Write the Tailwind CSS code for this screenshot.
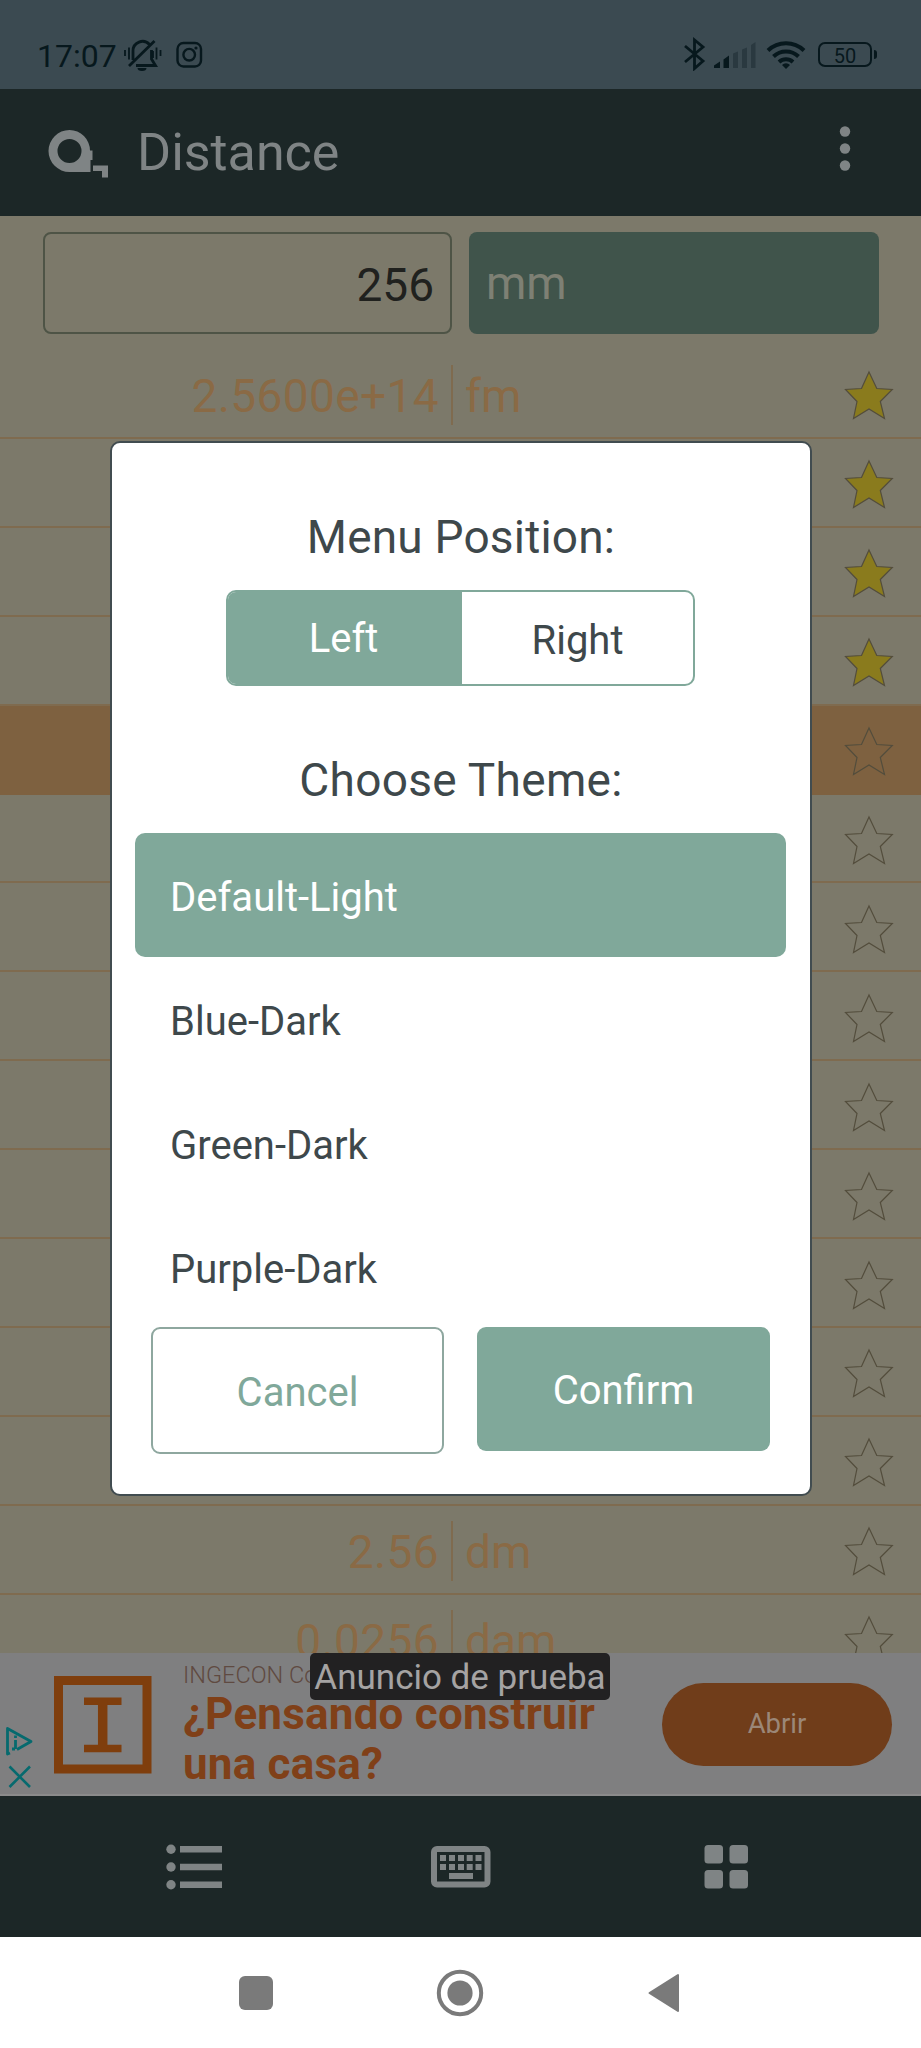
<!DOCTYPE html>
<html lang="en">
<head>
<meta charset="utf-8">
<title>Distance</title>
<script src="https://cdn.jsdelivr.net/npm/@tailwindcss/browser@4"></script>
</head>
<body class="bg-white">
<div class="relative flex h-[2048px] w-[921px] flex-col overflow-hidden font-['Roboto',sans-serif]">

  <!-- Status bar -->
  <div class="flex h-[89px] shrink-0 items-start bg-[#3b4a51] pl-[37px] text-[#07181d]">
    <span class="mt-[37px] w-[81px] text-[32px] leading-[38px] whitespace-nowrap">17:07</span>
    <svg class="mt-[36px] ml-[5px] h-[38px] w-[40px]" viewBox="0 0 40 38" fill="none" stroke="currentColor" stroke-width="2.8">
      <path d="M10 24V15a9.5 9.5 0 0 1 16.5-6.5M28.5 14v9l4 6.5H13M6 30L31.500 5M29.500 15v7"/>
      <path d="M14.500 32h9a4.500 3 0 0 1-9 0z" fill="currentColor" stroke="none"/>
      <path d="M2 14v6M6 11.500v12M33.500 11.500v12M37.500 14v6" stroke-width="1.800"/>
    </svg>
    <svg class="mt-[41px] ml-[12px] h-[28px] w-[28px]" viewBox="0 0 28 28" fill="none" stroke="currentColor" stroke-width="2.400">
      <rect x="2.500" y="2" width="23.500" height="23.500" rx="6"/><circle cx="14.200" cy="13.700" r="5.800"/><circle cx="21" cy="7" r="1.600" fill="currentColor" stroke="none"/>
    </svg>
    <svg class="mt-[37px] ml-[480px] h-[34px] w-[24px]" viewBox="0 0 24 34" fill="none" stroke="currentColor" stroke-width="2.800">
      <path d="M2 9l18 15-8.500 7.500V3L20 10 2 25"/>
    </svg>
    <svg class="mt-[41px] ml-[7px] h-[28px] w-[42px]" viewBox="0 0 42 28" fill="currentColor">
      <path d="M0 27v-2.500l6-4V27zM9.500 27v-8.500l5.500-4V27z"/>
      <path d="M19 27V12.500l5-2V27zM28 27V8.500l5-2V27zM37 27V4l4.500-3v26z" fill="#2a3940"/>
    </svg>
    <svg class="mt-[39px] ml-[10px] h-[32px] w-[40px]" viewBox="0 0 40 32" fill="none" stroke="currentColor" stroke-width="4">
      <path d="M2 11.500a26 26 0 0 1 36 0M7.500 17.500a18 18 0 0 1 25 0M13 23a10.500 10.500 0 0 1 14 0"/>
      <path d="M20 30l-4-4a5.500 5.500 0 0 1 8 0z" fill="currentColor" stroke="none"/>
    </svg>
    <div class="mt-[42px] ml-[12px] flex h-[25px] w-[54px] items-center justify-center rounded-[7px] border-[2.500px] border-current text-[20px] leading-none"><span class="pt-[2px]">50</span></div>
    <div class="mt-[50px] ml-[2px] h-[9px] w-[3px] rounded-r bg-current"></div>
  </div>

  <!-- App bar -->
  <header class="flex h-[127px] shrink-0 items-start bg-[#1c2727] pl-[48px] text-[#7f8485]">
    <svg class="mt-[40px] h-[52px] w-[61px]" viewBox="0 0 61 52" fill="currentColor">
      <path fill-rule="evenodd" d="M21.500 1A20.700 20.700 0 0 1 42 21.500h2.500V31H42.500V43H21.500A21 21 0 0 1 21.500 1zM21.500 10a12 12 0 1 0 0 24 12 12 0 0 0 0-24z"/>
      <path d="M45 36.500h15V48.500h-6v-6.500h-9z"/>
    </svg>
    <h1 class="mt-[34px] ml-[28px] text-[52px] leading-[60px]">Distance</h1>
    <svg class="mt-[36px] ml-auto mr-[68px] h-[48px] w-[16px]" viewBox="0 0 16 48" fill="currentColor"><circle cx="8" cy="6.500" r="5.200"/><circle cx="8" cy="23.500" r="5.200"/><circle cx="8" cy="40.500" r="5.200"/></svg>
  </header>

  <!-- Converter -->
  <main class="h-[1437px] shrink-0 overflow-hidden bg-[#7c796a] pt-[16px]">
    <div class="flex gap-[17px] pr-[42px] pl-[43px]">
      <div class="flex h-[102px] w-[409px] items-center justify-end rounded-[8px] border-2 border-[#4e5446] pt-[3px] pr-[16px] text-[46px] leading-[54px] text-[#20211e]">256</div>
      <div class="flex h-[102px] flex-1 items-center rounded-[8px] bg-[#40544b] pl-[17px] text-[46px] leading-[54px] text-[#7e8074]">mm</div>
    </div>
    <div id="rows" class="mt-[16px]"></div>
  </main>

  <!-- Ad banner -->
  <div class="relative flex h-[143px] shrink-0 border-b-2 border-[#8b8b8b] bg-[#7f7f80]">
    <div class="flex w-[54px] flex-col pt-[72px] pl-[5px] text-[#066a6e]">
      <svg class="h-[32px] w-[30px]" viewBox="0 0 30 32" fill="none" stroke="currentColor" stroke-width="2.800" stroke-linejoin="round"><path d="M5 28l-2.500 1V3.500L26 16.500 12 24.500"/><path d="M10.500 15v9M10.500 10.500v2.500M7 24h3"/></svg>
      <svg class="mt-[8px] ml-[3px] h-[24px] w-[24px]" viewBox="0 0 24 24" fill="none" stroke="currentColor" stroke-width="2.600"><path d="M1.500 1.500L22 22M22 1.500L1.500 22"/></svg>
    </div>
    <svg class="mt-[23px] h-[98px] w-[98px] text-[#7f3e0d]" viewBox="0 0 98 98" fill="none" stroke="currentColor"><rect x="4.500" y="4.500" width="88.500" height="88.500" stroke-width="9"/><path d="M30 25.300h37.500M30 72.500h37.500" stroke-width="7.500"/><path d="M48.700 25v47" stroke-width="9.500"/></svg>
    <div class="ml-[31px] w-[479px]">
      <div class="mt-[8px] text-[23.500px] leading-[28px] font-light text-[#5f4a41]">INGECON Co</div>
      <div class="pt-px text-[44px] leading-[49.500px] font-bold tracking-[0.200px] whitespace-nowrap text-[#804018]">¿Pensando construir<br>una casa?</div>
    </div>
    <div class="mt-[30px] flex h-[83px] w-[230px] items-center justify-center rounded-full bg-[#703d1a] text-[27.500px] leading-[32px] text-[#9b8777]"><span class="pb-[2px]">Abrir</span></div>
    <div class="absolute top-0 left-[310px] flex h-[47px] w-[300px] items-center justify-center rounded-[5px] bg-[#222122] pt-[2px] text-[35px] leading-[40px] whitespace-nowrap text-[#a5a3a3]">Anuncio de prueba</div>
  </div>

  <!-- Tab bar -->
  <nav class="flex h-[141px] shrink-0 items-start bg-[#1c2727] pt-[48px] text-[#7f8485]">
    <svg class="ml-[166px] h-[46px] w-[58px]" viewBox="0 0 58 46" fill="currentColor"><circle cx="5" cy="5.300" r="4.700"/><circle cx="5" cy="23" r="4.700"/><circle cx="5" cy="40.700" r="4.700"/><path d="M14 2h42v6.500H14zM14 19.700h42v6.500H14zM14 37.400h42v6.500H14z"/></svg>
    <svg class="ml-[207px] h-[46px] w-[60px]" viewBox="0 0 60 46" fill="currentColor">
      <rect x="3" y="5" width="53.500" height="35.500" rx="3" fill="none" stroke="currentColor" stroke-width="6"/>
      <path d="M9 11h6v6H9zM18 11h6v6h-6zM27 11h6v6h-6zM35.700 11h6v6h-6zM44.500 11h6v6h-6zM9 20h6v6H9zM18 20h6v6h-6zM27 20h6v6h-6zM35.700 20h6v6h-6zM44.500 20h6v6h-6zM18 29h24v6H18z"/>
    </svg>
    <svg class="ml-[213px] h-[46px] w-[46px]" viewBox="0 0 46 46" fill="currentColor"><rect x=".5" y="1" width="18.500" height="18.500" rx="3.500"/><rect x="25.500" y="1" width="18.500" height="18.500" rx="3.500"/><rect x=".5" y="26" width="18.500" height="18.500" rx="3.500"/><rect x="25.500" y="26" width="18.500" height="18.500" rx="3.500"/></svg>
  </nav>

  <!-- System navigation -->
  <div class="flex h-[111px] shrink-0 items-center bg-white text-[#7a7a7a]">
    <div class="ml-[239px] h-[34px] w-[34px] rounded-[6px] bg-current"></div>
    <svg class="ml-[163px] h-[48px] w-[48px]" viewBox="0 0 48 48" fill="currentColor"><circle cx="24" cy="24" r="21.200" fill="none" stroke="currentColor" stroke-width="4"/><circle cx="24" cy="24" r="12.600"/></svg>
    <svg class="ml-[163px] h-[40px] w-[34px]" viewBox="0 0 34 40" fill="currentColor" stroke="currentColor" stroke-width="2" stroke-linejoin="round"><path d="M31 2v36L2.500 20z"/></svg>
  </div>

  <!-- Settings dialog -->
  <section class="absolute top-[441px] left-[110px] flex h-[1055px] w-[702px] flex-col rounded-[10px] border-2 border-[#414c50] bg-white text-[#3e484b]">
    <h2 class="mt-[67px] text-center text-[46px] leading-[54px] tracking-[0.200px]">Menu Position:</h2>
    <div class="mt-[26px] ml-[114px] flex h-[96px] w-[469px] overflow-hidden rounded-[10px] border-2 border-[#80a89a] text-[40px] leading-[48px]">
      <div class="flex w-[234px] items-center justify-center bg-[#80a89a] pt-px pr-[3px] text-white">Left</div>
      <div class="flex flex-1 items-center justify-center pt-[5px]">Right</div>
    </div>
    <h2 class="mt-[67px] text-center text-[46px] leading-[54px] tracking-[0.300px]">Choose Theme:</h2>
    <ul class="mt-[26px] ml-[23px] h-[491px] w-[651px] text-[40px] leading-[48px]">
      <li class="flex h-[124px] items-center rounded-[10px] bg-[#80a89a] pt-[5px] pl-[35px] text-white">Default-Light</li>
      <li class="flex h-[124.300px] items-center pt-[5px] pl-[35px]">Blue-Dark</li>
      <li class="flex h-[124.300px] items-center pt-[5px] pl-[35px]">Green-Dark</li>
      <li class="flex h-[124.300px] items-center pt-[5px] pl-[35px]">Purple-Dark</li>
    </ul>
    <div class="mt-[3px] ml-[39px] flex gap-[33px] text-[40px] leading-[48px]">
      <button class="flex h-[127px] w-[293px] items-center justify-center rounded-[9px] border-2 border-[#8ea79f] pt-[5px] text-[#80a89a]">Cancel</button>
      <button class="flex h-[124px] w-[293px] items-center justify-center rounded-[9px] bg-[#80a89a] pt-[4px] text-white">Confirm</button>
    </div>
  </section>
</div>

<script>
  // value, unit, starred, selected
  const rows = [
    ['2.5600e+14', 'fm', 1], ['', '', 1], ['', '', 1], ['', '', 1], ['', '', 0, 1],
    ['', '', 0], ['', '', 0], ['', '', 0], ['', '', 0], ['', '', 0], ['', '', 0],
    ['', '', 0], ['', '', 0], ['2.56', 'dm', 0], ['0.0256', 'dam', 0]
  ];
  document.getElementById('rows').innerHTML = rows.map(([v, u, s, on]) => `
    <div class="flex h-[88.920px] items-center border-b-2 pt-[4px] text-[46px] leading-[54px] text-[#8a6a45] ${on ? 'border-[#7e6140] bg-[#7e6140]' : 'border-[#7f6b4f]'}">
      <span class="w-[439px] pt-[2px] text-right tracking-[0.4px]">${v}</span>
      <span class="ml-[12px] h-[60px] w-[2px] bg-[#7f6b4f]"></span>
      <span class="ml-[12px] flex-1 pt-[2px]">${u}</span>
      <svg class="mr-[26px] h-[52px] w-[52px]" viewBox="0 0 52 52" fill="${s ? '#8a7b1d' : 'none'}" stroke="#534d3c" stroke-width="1.200"><path d="M26 3l7.800 16.500L49.300 20.500 37.300 32.500 41.500 49.500 26 40 10.500 49.500 14 32.500 2.500 20.500 18.500 19.500z"/></svg>
    </div>`).join('');
</script>
</body>
</html>
